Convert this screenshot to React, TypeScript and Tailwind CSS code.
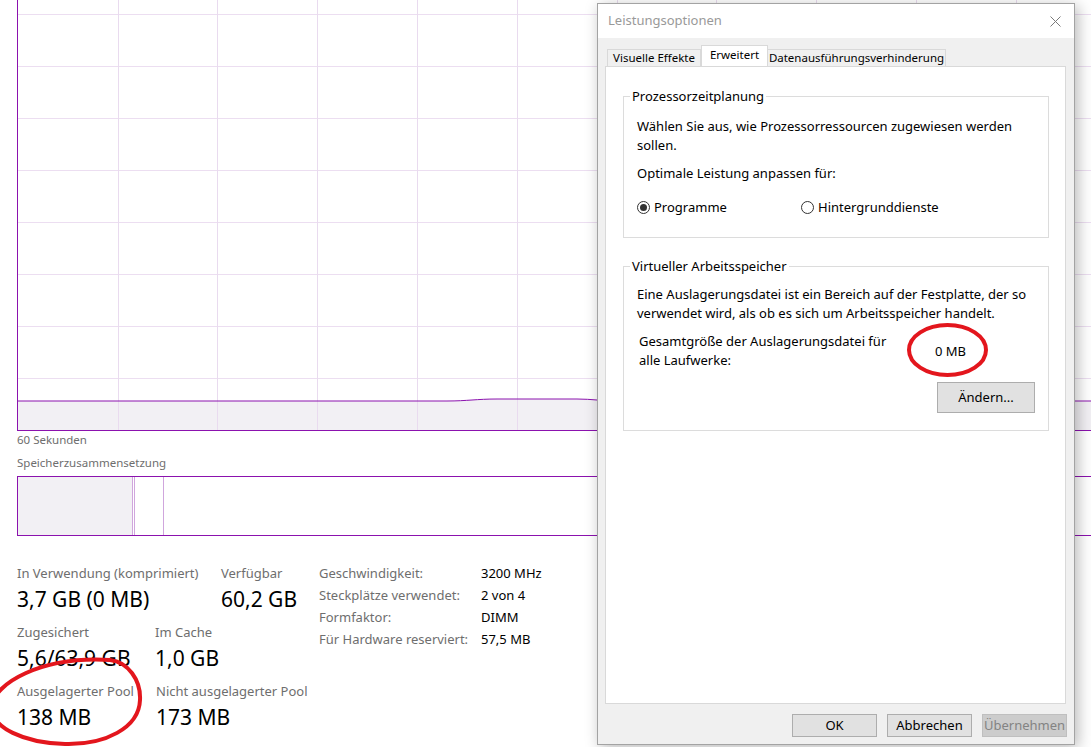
import React from "react";

const PURPLE = "#8b12ae";

function UsageGraph() {
  const width = 1080;
  const hLines = [14, 66, 118, 170, 222, 274, 326, 378];
  const vLines = [101, 200, 300, 400, 500, 600, 699, 799, 899, 999];
  const line =
    "M0 384 L430 384 C450 384 460 382 480 382 L560 382 C575 382 585 384 600 384 L1080 384";
  return (
    <svg width={width} height={431} className="block" shapeRendering="crispEdges">
      <path d={`${line} L1080 414 L0 414 Z`} fill="#f2f0f4" transform="translate(0 17)" />
      {hLines.map((y) => (
        <line key={`h${y}`} x1={0} x2={width} y1={y + 0.5} y2={y + 0.5} stroke="#ecdef1" />
      ))}
      {vLines.map((x) => (
        <line key={`v${x}`} x1={x + 0.5} x2={x + 0.5} y1={0} y2={430} stroke="#e9dbef" />
      ))}
      <path d={line} fill="none" stroke={PURPLE} strokeWidth={1} transform="translate(0 17)" shapeRendering="auto" />
      <line x1={0.5} x2={0.5} y1={0} y2={431} stroke={PURPLE} />
      <line x1={0} x2={width} y1={430.5} y2={430.5} stroke={PURPLE} />
    </svg>
  );
}

function Stat({ label, value }: { label: string; value: string }) {
  return (
    <div>
      <div className="text-[13px] leading-[18px] text-[#6e6e6e] whitespace-nowrap">{label}</div>
      <div className="mt-[3px] text-[21px] leading-[28px] text-black whitespace-nowrap">{value}</div>
    </div>
  );
}

function Radio({ checked, label }: { checked?: boolean; label: string }) {
  return (
    <div className="flex items-center gap-[4px]">
      <span className="flex h-[13px] w-[13px] items-center justify-center rounded-full border border-[#333] bg-white">
        {checked && <span className="h-[7px] w-[7px] rounded-full bg-[#333]" />}
      </span>
      <span>{label}</span>
    </div>
  );
}

function Button({ children, disabled, className = "" }: { children: React.ReactNode; disabled?: boolean; className?: string }) {
  return (
    <div
      className={`flex items-center justify-center border text-[13px] ${
        disabled ? "border-[#bfbfbf] bg-[#cccccc] text-[#838383]" : "border-[#adadad] bg-[#e1e1e1] text-black"
      } ${className}`}
    >
      {children}
    </div>
  );
}

function OptionsDialog() {
  return (
    <div className="absolute left-[597px] top-[3px] flex h-[742px] w-[478px] flex-col border border-[#a3a3a3] bg-[#f0f0f0] shadow-[3px_3px_14px_rgba(0,0,0,0.28)]">
      {/* title bar */}
      <div className="flex h-[34px] items-center justify-between bg-white pl-[10px] pr-[13px]">
        <span className="text-[13px] text-[#999999]">Leistungsoptionen</span>
        <svg width="11" height="11" viewBox="0 0 11 11">
          <path d="M0.5 0.5 L10.5 10.5 M10.5 0.5 L0.5 10.5" stroke="#7a7a7a" strokeWidth="1" />
        </svg>
      </div>

      {/* tabs */}
      <div className="mt-[7px] flex whitespace-nowrap pl-[9px] text-[11.5px] leading-[15px]">
        <div className="mt-[4px] flex h-[17px] w-[94px] items-center justify-center border border-b-0 border-[#d9d9d9] bg-[#f0f0f0] pb-[2px]">
          Visuelle Effekte
        </div>
        <div className="relative z-10 -mb-px flex h-[21px] w-[67px] items-center justify-center border border-b-0 border-[#d9d9d9] bg-white pb-[3px]">
          Erweitert
        </div>
        <div className="mt-[4px] flex h-[17px] w-[178px] items-center justify-center border border-b-0 border-l-0 border-[#d9d9d9] bg-[#f0f0f0] pb-[2px]">
          Datenausführungsverhinderung
        </div>
      </div>

      {/* tab page */}
      <div className="ml-[7px] h-[638px] w-[461px] border border-[#d9d9d9] bg-white text-[13px] leading-[19px] text-black">
        <div className="ml-[17px] mt-[29px] h-[142px] w-[426px] border border-[#dcdcdc]">
          <div className="-mt-[10px] ml-[6px] w-fit bg-white px-[2px] leading-[18px]">Prozessorzeitplanung</div>
          <div className="pl-[13px]">
            <p className="mt-[12px] whitespace-nowrap">
              Wählen Sie aus, wie Prozessorressourcen zugewiesen werden
              <br />
              sollen.
            </p>
            <p className="mt-[9px]">Optimale Leistung anpassen für:</p>
            <div className="mt-[15px] flex">
              <div className="w-[164px]">
                <Radio checked label="Programme" />
              </div>
              <Radio label="Hintergrunddienste" />
            </div>
          </div>
        </div>

        <div className="ml-[17px] mt-[28px] h-[165px] w-[426px] border border-[#dcdcdc]">
          <div className="-mt-[10px] ml-[6px] w-fit bg-white px-[2px] leading-[18px]">Virtueller Arbeitsspeicher</div>
          <p className="mt-[10px] whitespace-nowrap pl-[13px]">
            Eine Auslagerungsdatei ist ein Bereich auf der Festplatte, der so
            <br />
            verwendet wird, als ob es sich um Arbeitsspeicher handelt.
          </p>
          <div className="mt-[9px] flex items-center pl-[15px]">
            <p className="w-[296px]">
              Gesamtgröße der Auslagerungsdatei für
              <br />
              alle Laufwerke:
            </p>
            <span>0 MB</span>
          </div>
          <div className="mt-[12px] flex justify-end pr-[13px]">
            <Button className="h-[31px] w-[98px]">Ändern...</Button>
          </div>
        </div>
      </div>

      {/* dialog buttons */}
      <div className="mt-[10px] flex justify-end gap-[10px] pr-[7px]">
        <Button className="h-[23px] w-[85px]">OK</Button>
        <Button className="h-[23px] w-[85px]">Abbrechen</Button>
        <Button disabled className="h-[23px] w-[85px]">
          Übernehmen
        </Button>
      </div>
    </div>
  );
}

function Annotations() {
  return (
    <svg className="pointer-events-none absolute left-0 top-0" width={1091} height={747}>
      <ellipse cx={947.5} cy={350} rx={38.5} ry={25} fill="none" stroke="#e3161d" strokeWidth={4} />
      <path
        d="M110 660 C128 662 141 680 140 700 C139 728 105 745 65 744 C25 743 -10 728 -8 706 C-6 684 40 656 110 660 Z"
        fill="none"
        stroke="#e3161d"
        strokeWidth={4}
      />
    </svg>
  );
}

export default function App() {
  return (
    <div className="relative h-[747px] w-[1091px] overflow-hidden bg-white font-['Noto_Sans',sans-serif]">
      <div className="pl-[17px]">
        <UsageGraph />
        <div className="mt-[1px] text-[11.5px] leading-[16px] text-[#6e6e6e]">60 Sekunden</div>
        <div className="mt-[7px] text-[11.5px] leading-[16px] text-[#6e6e6e]">Speicherzusammensetzung</div>

        {/* memory composition bar */}
        <div className="mt-[5px] flex h-[60px] w-[1080px] border border-r-0 border-[#8b12ae]">
          <div className="w-[114px] bg-[#f2f0f4]" />
          <div className="w-px bg-[#d0a6dd]" />
          <div className="w-px" />
          <div className="w-px bg-[#d0a6dd]" />
          <div className="w-[28px]" />
          <div className="w-px bg-[#d0a6dd]" />
        </div>

        {/* statistics */}
        <div className="mt-[28px] flex items-start">
          <div className="flex w-[302px] flex-col gap-[10px]">
            <div className="flex">
              <div className="w-[204px]">
                <Stat label="In Verwendung (komprimiert)" value="3,7 GB (0 MB)" />
              </div>
              <Stat label="Verfügbar" value="60,2 GB" />
            </div>
            <div className="flex">
              <div className="w-[138px]">
                <Stat label="Zugesichert" value="5,6/63,9 GB" />
              </div>
              <Stat label="Im Cache" value="1,0 GB" />
            </div>
            <div className="flex">
              <div className="w-[139px]">
                <Stat label="Ausgelagerter Pool" value="138 MB" />
              </div>
              <Stat label="Nicht ausgelagerter Pool" value="173 MB" />
            </div>
          </div>
          <div className="-mt-[2px] grid grid-cols-[162px_auto] content-start text-[13px] leading-[22px]">
            <span className="text-[#6e6e6e]">Geschwindigkeit:</span>
            <span className="text-black">3200 MHz</span>
            <span className="text-[#6e6e6e]">Steckplätze verwendet:</span>
            <span className="text-black">2 von 4</span>
            <span className="text-[#6e6e6e]">Formfaktor:</span>
            <span className="text-black">DIMM</span>
            <span className="text-[#6e6e6e]">Für Hardware reserviert:</span>
            <span className="text-black">57,5 MB</span>
          </div>
        </div>
      </div>

      <OptionsDialog />
      <Annotations />
    </div>
  );
}
